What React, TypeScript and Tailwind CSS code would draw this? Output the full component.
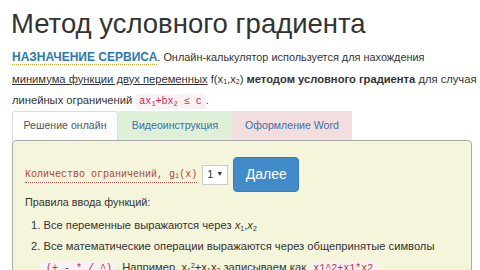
import React from "react";

const code =
  "rounded-[3px] bg-[#f9f2f4] px-[4px] py-[2px] font-['Liberation_Mono',monospace] text-[10px] leading-none text-[#c7254e]";

function Tabs() {
  return (
    <div className="ml-[12px] flex h-[29px] items-stretch text-[10.6px]">
      <div className="flex w-[106px] items-center justify-center rounded-t-[4px] border border-b-0 border-[#ddd] bg-white text-[#555]">
        Решение онлайн
      </div>
      <div className="flex w-[114px] items-center justify-center bg-[#dff0d8] text-[#3b6fa8]">
        Видеоинструкция
      </div>
      <div className="flex w-[120px] items-center justify-center bg-[#f2dede] text-[#3b6fa8]">
        Оформление Word
      </div>
    </div>
  );
}

export default function App() {
  return (
    <div className="h-[270px] w-[480px] overflow-hidden bg-white font-['Liberation_Sans',Arial,sans-serif] text-[#333]">
      <h1 className="pl-[11px] pt-[6px] text-[27.5px] leading-[36px] font-normal">
        Метод условного градиента
      </h1>

      <div className="mt-[5px] h-[64px] px-[12px] text-[11.2px] leading-[21.5px] whitespace-nowrap">
        <p>
          <span className="border-b border-dotted border-[#e0a030] text-[12px] font-bold text-[#2a7ab0]">
            НАЗНАЧЕНИЕ СЕРВИСА
          </span>
          <span className="text-[10.9px]">. Онлайн-калькулятор используется для нахождения</span>
          <br />
          <span className="underline">минимума функции двух переменных</span>{" "}
          f(x<sub className="text-[7px]">1</sub>,x<sub className="text-[7px]">2</sub>){" "}
          <b>методом условного градиента</b> для случая
          <br />
          линейных ограничений{" "}
          <code className={code}>
            ax<sub className="text-[7px]">1</sub>+bx<sub className="text-[7px]">2</sub> ≤ c
          </code>
          .
        </p>
      </div>

      <Tabs />

      <div className="ml-[12px] w-[460px] rounded-[4px] border border-[#aaa] bg-[#f5f5dc] px-[12px] pt-[16px] pb-[10px] text-[11.3px]">
        <div className="flex items-center gap-[5px]">
          <span className="border-b border-dotted border-[#c0504d] font-['Liberation_Mono',monospace] text-[10px] text-[#b5442f]">
            Количество ограничений, g<sub className="text-[7px]">1</sub>(x)
          </span>
          <div className="flex h-[20px] w-[26px] items-center justify-between border border-[#ccc] bg-white px-[4px] text-[11px]">
            <span>1</span>
            <span className="text-[7px]">▼</span>
          </div>
          <button className="h-[35px] w-[66px] rounded-[4px] border border-[#357ebd] bg-[#428bca] text-[14px] text-white">
            Далее
          </button>
        </div>

        <div className="mt-[0px] text-[10.8px] leading-[21px]">Правила ввода функций:</div>
        <ol className="mt-[2px] flex flex-col pl-[6px] text-[11.2px] leading-[21px]">
          <li>
            1. Все переменные выражаются через <i>x</i>
            <sub className="text-[7px]">1</sub>,<i>x</i>
            <sub className="text-[7px]">2</sub>
          </li>
          <li>2. Все математические операции выражаются через общепринятые символы</li>
          <li className="pl-[11px]">
            <code className={code}>(+ - * / ^)</code>. Например, x<sub className="text-[7px]">1</sub>
            <sup className="text-[7px]">2</sup>+x<sub className="text-[7px]">1</sub>x
            <sub className="text-[7px]">2</sub> записываем как <code className={code}>x1^2+x1*x2</code>
          </li>
        </ol>
      </div>
    </div>
  );
}
